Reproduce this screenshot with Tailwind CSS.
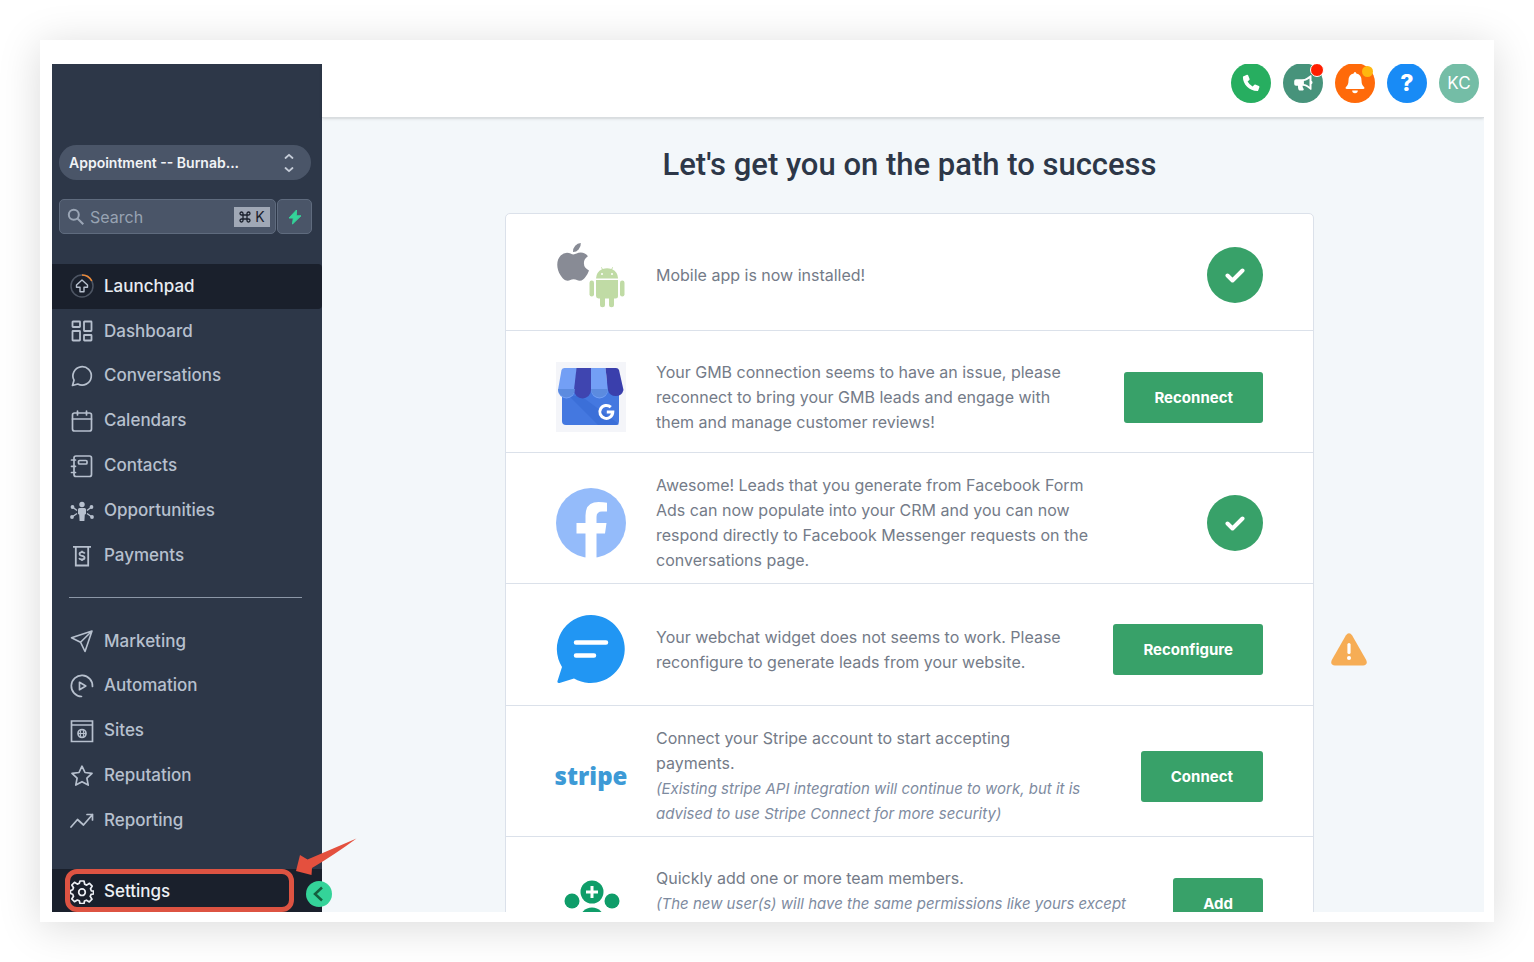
<!DOCTYPE html>
<html lang="en">
<head>
    <meta charset="UTF-8">
    <meta name="viewport" content="width=device-width, initial-scale=1.0">
    <title>Launchpad</title>
    <script src="https://cdn.jsdelivr.net/npm/@tailwindcss/browser@4"></script>
</head>
<body class="h-screen bg-white p-10 font-['Inter',sans-serif]">
    <div class="h-full bg-white pt-6 pr-[10px] pb-[10px] pl-3 shadow-[0_5px_40px_rgba(0,0,0,0.15)]">
        <div class="relative flex h-full overflow-hidden">

            <!-- Sidebar -->
            <aside class="flex w-[270px] shrink-0 flex-col bg-[#2d3748] pt-[81px]">
                <button type="button" class="mr-[11px] ml-[7px] flex h-[35px] shrink-0 items-center justify-between rounded-full bg-[#4a5568] pr-4 pl-[10px] text-sm font-semibold text-[#f1f3f6]">
                    <span>Appointment -- Burnab...</span>
                    <svg class="h-5 w-3" viewBox="0 0 12 20" fill="none" stroke="#c5ccd8" stroke-width="1.800" stroke-linecap="round" stroke-linejoin="round"><path d="M2.500 5 6 1.800l3.500 3.200M2.500 15 6 18.200l3.500-3.200"/></svg>
                </button>

                <div class="mt-[19px] mr-[10px] ml-[7px] flex h-[35px] shrink-0 gap-px">
                    <label class="flex min-w-0 flex-1 items-center rounded-[5px] border border-[#5f6b7e] bg-[#4a5568] pr-[5px] pl-[7px]">
                        <svg class="h-[18px] w-[18px] shrink-0" viewBox="0 0 18 18" fill="none" stroke="#9ba6b6" stroke-width="2"><circle cx="6.800" cy="6.800" r="5"/><path d="m10.500 10.500 5.800 5.800"/></svg>
                        <input type="text" placeholder="Search" aria-label="Search" class="ml-[5px] min-w-0 flex-1 bg-transparent text-base text-white outline-none placeholder:text-[#98a3b3]">
                        <kbd class="flex h-5 w-9 shrink-0 items-center justify-center gap-1 bg-[#a0a8b6] font-['Inter',sans-serif] text-sm text-[#1a202c]">
                            <svg class="h-3 w-3" viewBox="0 0 12 12" fill="none" stroke="currentColor" stroke-width="1.300"><path d="M4 4h4v4H4zM4 4H2.500A1.500 1.500 0 1 1 4 2.500zM8 4V2.500A1.500 1.500 0 1 1 9.500 4zM8 8h1.500A1.500 1.500 0 1 1 8 9.500zM4 8v1.500A1.500 1.500 0 1 1 2.500 8z"/></svg>K
                        </kbd>
                    </label>
                    <button type="button" aria-label="Quick actions" class="flex w-[35px] items-center justify-center rounded-[5px] border border-[#5f6b7e] bg-[#4a5568]">
                        <svg class="h-4 w-4" viewBox="0 0 16 16" fill="#34d399"><path d="M9.500 1 2 9h4.300L5.500 15 14 6.800H9.300z" stroke="#34d399" stroke-linejoin="round"/></svg>
                    </button>
                </div>

                <nav class="mt-[30px] grid h-[314px] shrink-0 auto-rows-fr text-[17px] font-medium text-[#b7c0ce]">
                    <a href="#" class="flex items-center gap-[10px] rounded-r bg-[#1a202c] pl-[18px] text-[#e8ecf2]">
                        <svg class="h-6 w-6" viewBox="0 0 24 24" fill="none" stroke-width="1.500"><circle cx="12" cy="12" r="11" stroke="#4d5563"/><path d="M12 1a11 11 0 0 1 9.800 6" stroke="#ed8936"/><path d="M12 6 6.500 11v2.200H10v4.500h4v-4.500h3.500V11z" stroke="#b7c0ce" stroke-width="1.400" stroke-linejoin="round"/></svg>
                        Launchpad
                    </a>
                    <a href="#" class="flex items-center gap-[10px] pl-[18px]">
                        <svg class="h-6 w-6" viewBox="0 0 24 24" fill="none" stroke="currentColor" stroke-width="1.800"><rect x="2.500" y="2.500" width="7.500" height="5.500" rx=".5"/><rect x="14" y="2.500" width="7.500" height="9.500" rx=".5"/><rect x="2.500" y="12" width="7.500" height="9.500" rx=".5"/><rect x="14" y="16" width="7.500" height="5.500" rx=".5"/></svg>
                        Dashboard
                    </a>
                    <a href="#" class="flex items-center gap-[10px] pl-[18px]">
                        <svg class="h-6 w-6" viewBox="0 0 24 24" fill="none" stroke="currentColor" stroke-width="1.700" stroke-linejoin="round"><path d="M2.500 21.500 4 16.200A9.200 9.200 0 1 1 7.800 20z"/></svg>
                        Conversations
                    </a>
                    <a href="#" class="flex items-center gap-[10px] pl-[18px]">
                        <svg class="h-6 w-6" viewBox="0 0 24 24" fill="none" stroke="currentColor" stroke-width="1.700" stroke-linecap="round"><rect x="2.500" y="4" width="19" height="18" rx="2"/><path d="M2.500 10h19M7.500 2v4M16.500 2v4"/></svg>
                        Calendars
                    </a>
                    <a href="#" class="flex items-center gap-[10px] pl-[18px]">
                        <svg class="h-6 w-6" viewBox="0 0 24 24" fill="none" stroke="currentColor" stroke-width="1.700" stroke-linecap="round"><rect x="4" y="2" width="17.500" height="20.500" rx="2"/><rect x="8.500" y="6.500" width="8.500" height="3.500" rx="1"/><path d="M1.500 6h4M1.500 12.300h4M1.500 18.500h4"/></svg>
                        Contacts
                    </a>
                    <a href="#" class="flex items-center gap-[10px] pl-[18px]">
                        <svg class="h-6 w-6" viewBox="0 0 24 24" fill="currentColor"><circle cx="12" cy="5.500" r="2.700"/><path d="M9.500 9h5q1.500 0 1.500 1.500v4q0 1-1.200 1l-.4 6.500h-4.800l-.4-6.500q-1.200 0-1.200-1v-4Q8 9 9.500 9z"/><circle cx="2.500" cy="8" r="1.900"/><circle cx="2" cy="18" r="1.900"/><circle cx="21.500" cy="8" r="1.900"/><circle cx="22" cy="18" r="1.900"/><path d="M2.500 8 7 11.500M2 18l5-3.500M21.500 8 17 11.500M22 18l-5-3.500" stroke="currentColor" stroke-width="1.400"/></svg>
                        Opportunities
                    </a>
                    <a href="#" class="flex items-center gap-[10px] pl-[18px]">
                        <svg class="h-6 w-6" viewBox="0 0 24 24" fill="none" stroke="currentColor" stroke-width="1.800"><path d="M3 2.800h18M5.800 2.800v18.700h12.400V2.800"/><path d="M14.800 9.500q-.8-1.300-2.800-1.300c-3.200 0-3.400 3.200 0 3.600s3.400 3.700 0 3.700q-2.200 0-2.900-1.400M12 6.800v1.400m0 7.300V17"/></svg>
                        Payments
                    </a>
                </nav>

                <hr class="mt-[19px] mr-5 ml-[17px] border-[#8c97a7]">

                <nav class="mt-[21px] grid h-[224px] shrink-0 auto-rows-fr text-[17px] font-medium text-[#b7c0ce]">
                    <a href="#" class="flex items-center gap-[10px] pl-[18px]">
                        <svg class="h-6 w-6" viewBox="0 0 24 24" fill="none" stroke="currentColor" stroke-width="1.600" stroke-linejoin="round"><path d="M22 2 1.500 8.800l9 4.400L15 22.500zM22 2 10.500 13.200"/></svg>
                        Marketing
                    </a>
                    <a href="#" class="flex items-center gap-[10px] pl-[18px]">
                        <svg class="h-6 w-6" viewBox="0 0 24 24" fill="none" stroke="currentColor" stroke-width="1.700" stroke-linecap="round" stroke-linejoin="round"><path d="M11.500 22.500A10.600 10.600 0 1 1 22.500 12.500M9.500 8.300v7.400l6.300-3.700z"/></svg>
                        Automation
                    </a>
                    <a href="#" class="flex items-center gap-[10px] pl-[18px]">
                        <svg class="h-6 w-6" viewBox="0 0 24 24" fill="none" stroke="currentColor" stroke-width="1.700"><path d="M1.500 2h21v20.500h-21zM1.500 6h21"/><circle cx="12" cy="14.500" r="4"/><ellipse cx="12" cy="14.500" rx="1.700" ry="4" stroke-width="1.100"/><path d="M8 14.500h8" stroke-width="1.200"/></svg>
                        Sites
                    </a>
                    <a href="#" class="flex items-center gap-[10px] pl-[18px]">
                        <svg class="h-6 w-6" viewBox="0 0 24 24" fill="none" stroke="currentColor" stroke-width="1.700" stroke-linejoin="round"><path d="m12 2.200 3 6.300 7 .9-5.100 4.800 1.300 6.900L12 17.700l-6.200 3.400 1.300-6.900L2 9.400l7-.9z"/></svg>
                        Reputation
                    </a>
                    <a href="#" class="flex items-center gap-[10px] pl-[18px]">
                        <svg class="h-6 w-6" viewBox="0 0 24 24" fill="none" stroke="currentColor" stroke-width="1.700" stroke-linecap="round" stroke-linejoin="round"><path d="m1 18 6.500-7.500 6 5.500 9-10.500M17 5.500h5.500V11"/></svg>
                        Reporting
                    </a>
                </nav>

                <a href="#" class="mt-[26px] flex flex-1 items-center gap-[10px] bg-[#1a202c] pt-[3px] pl-[18px] text-[17px] font-medium text-[#edf0f5]">
                    <svg class="h-6 w-6" viewBox="0 0 24 24" fill="none" stroke="currentColor" stroke-width="1.700" stroke-linejoin="round"><path d="M10 1h4l.7 3.200 2 .9 2.800-1.800 2.700 2.800-1.700 2.700.8 2L23.500 11v3l-2.400.4-.9 2 1.800 2.800-2.700 2.700-2.800-1.700-2 .8L14 23.500h-4l-.7-2.700-2-.8-2.800 1.700L1.800 19l1.700-2.800-.8-2L.5 13.500v-3l2.200-.7.8-2L1.800 5l2.700-2.700 2.800 1.800 2-.9z"/><circle cx="12" cy="12.200" r="3.300"/></svg>
                    Settings
                </a>
            </aside>

            <!-- Main -->
            <div class="flex min-w-0 flex-1 flex-col bg-[#f3f7fa]">
                <header class="z-10 h-[54px] shrink-0 border-b border-[#d9dde0] bg-white pr-[5px] shadow-sm">
                    <div class="-mt-px flex justify-end gap-3">
                        <button type="button" aria-label="Call" class="flex h-10 w-10 items-center justify-center rounded-full bg-[#27ae60]">
                            <svg class="h-5 w-5" viewBox="0 0 20 20" fill="white"><path d="M2.600 3.200 6 1.800q.8-.2 1.100.5L8.600 6q.2.700-.3 1.100L6.600 8.600a12 12 0 0 0 5 5l1.500-1.700q.5-.5 1.100-.3l3.700 1.500q.7.400.5 1.100l-1.200 3.200q-.2.700-.9.700C8.400 18.100 1.900 11.600 1.900 4.100q0-.7.700-.9z"/></svg>
                        </button>
                        <button type="button" aria-label="Announcements" class="relative flex h-10 w-10 items-center justify-center rounded-full bg-[#47937b]">
                            <svg class="h-5 w-5" viewBox="0 0 20 20" fill="white"><path fill-rule="evenodd" d="M17.500 2.200q1-.4 1 .8v4.800a2 2 0 0 1 0 3.500v4.800q0 1.200-1 .6l-3.600-2.600q-2-1.300-4.400-1.300.1 2 1.200 3.300.4 1.300-.9 1.500H6.600q-.8 0-1-.8-.8-2-.6-4H3q-1.800 0-1.800-1.800V8.200Q1.200 6.300 3 6.300h6q2.700 0 4.900-1.500zm-1 3.300-1.600 1.100q-1.800 1.200-4 1.500v3q2.200.3 4 1.500l1.600 1.100z"/></svg>
                            <span class="absolute top-0 -right-px h-[14px] w-[14px] rounded-full border border-white bg-[#ff1e00]"></span>
                        </button>
                        <button type="button" aria-label="Notifications" class="relative flex h-10 w-10 items-center justify-center rounded-full bg-[#ff6a0a]">
                            <svg class="h-[22px] w-[22px]" viewBox="0 0 22 22" fill="white"><path d="M11 0q1.300 0 1.300 1.500 5.200 1 5.200 7 0 4.500 2.800 6.700.7 1.800-1 1.800H2.700q-1.700 0-1-1.800 2.800-2.200 2.800-6.700 0-6 5.200-7Q9.700 0 11 0zM8.200 18.500h5.600a2.800 2.800 0 0 1-5.600 0z"/></svg>
                            <span class="absolute top-[3px] right-[2px] h-[11px] w-[11px] rounded-full bg-[#ffb70f]"></span>
                        </button>
                        <button type="button" aria-label="Help" class="flex h-10 w-10 items-center justify-center rounded-full bg-[#188bf6] pt-px text-[23px] font-extrabold text-white">?</button>
                        <button type="button" aria-label="Account" class="flex h-10 w-10 items-center justify-center rounded-full bg-[#74bda6] pt-[2px] text-[17px] text-white">KC</button>
                    </div>
                </header>

                <main class="pl-[13px]">
                    <h1 class="mt-[25px] text-center font-['Roboto',sans-serif] text-[31px] leading-[44px] font-medium text-[#2d3748]">Let's get you on the path to success</h1>

                    <ul class="mx-auto mt-[26px] w-full max-w-[809px] divide-y divide-[#dbe1ea] rounded-[5px] border border-[#dbe1ea] bg-white text-base leading-[25px] text-[#747b88]">
                        <li class="flex min-h-[117px] items-center gap-[30px] px-[50px] pt-[6px]">
                            <svg class="h-[70px] w-[70px] shrink-0" viewBox="0 0 70 70"><g fill="#888b95"><path d="M24.800 3q.4 3.700-2.200 6.400Q20.300 12 17 11.900q-.2-3.500 2.200-6.200Q21.500 3.300 24.800 3z"/><path d="M17.500 14.400c2 0 4-1.900 7.200-1.900q4.700.1 7.200 3.700-4.200 2.700-4 7.100.1 4.900 5.100 7.100-1 3-3.200 6c-1.800 2.500-3.400 4.300-6 4.300-2.400 0-3.300-1.500-6.200-1.500s-3.800 1.500-6 1.500C8.500 40.700 6.300 38 4.500 35.300 0 28.500.3 20 4.700 15.600Q7.500 12.700 11 12.700c2.800 0 4.500 1.700 6.500 1.700z"/></g><g fill="#c0dba5"><path d="M40 38.500q.3-6.500 6-9.200l-1-1.800.5-.4 1.300 1.800a13 13 0 0 1 8.500 0l1.300-1.800.5.400-1 1.800q5.700 2.700 6 9.200zM40 40h22v16q0 2.500-2.500 2.500H58v6.200a2.500 2.500 0 0 1-5 0v-6.200h-4v6.200a2.500 2.500 0 0 1-5 0v-6.200h-1.500Q40 58.500 40 56z"/><rect x="33.500" y="40.500" width="4.500" height="16" rx="2.200"/><rect x="64" y="40.500" width="4.500" height="16" rx="2.200"/></g><circle cx="46" cy="34" r="1" fill="white"/><circle cx="56" cy="34" r="1" fill="white"/></svg>
                            <p class="flex-1">Mobile app is now installed!</p>
                            <span class="flex h-14 w-14 items-center justify-center rounded-full bg-[#38a169]"><svg class="h-5 w-5" viewBox="0 0 20 20" fill="none" stroke="white" stroke-width="4" stroke-linecap="round" stroke-linejoin="round"><path d="m2.500 10.500 5 5 10-10"/></svg></span>
                        </li>
                        <li class="flex min-h-[122px] items-center gap-[30px] px-[50px] pt-[11px]">
                            <svg class="h-[70px] w-[70px] shrink-0" viewBox="0 0 70 70"><path fill="#f4f5f9" d="M0 0h70v70H0z"/><rect x="6" y="20" width="57" height="43" rx="4" fill="#4478e0"/><path d="M13 34 25 34 63 62q-1 1-4 1H42z" fill="#3b6fd8"/><path d="M5.500 8q.8-2 3-2H21l-2 22a8.500 8.500 0 0 1-17 0z" fill="#739ff5"/><path d="M20.500 6H35v22a8.200 8.200 0 0 1-17 0z" fill="#3f45b0"/><path d="M35 6h14.500L52 28a8.500 8.500 0 0 1-17 0z" fill="#739ff5"/><path d="M49.500 6H60q2.200 0 3 2l4.500 20a8 8 0 0 1-15.500 0z" fill="#3a3fac"/><path d="M2 27h17a8.500 8.500 0 0 1-17 0zm33 0h17a8.500 8.500 0 0 1-17 0z" fill="#5c8bdf"/><path d="M54.800 45.200a6.500 6.500 0 1 0 2 4.800h-6" fill="none" stroke="white" stroke-width="3"/></svg>
                            <p class="flex-1">Your GMB connection seems to have an issue, please<br>reconnect to bring your GMB leads and engage with<br>them and manage customer reviews!</p>
                            <button type="button" class="h-[51px] rounded-[3px] bg-[#38a169] px-[30px] text-[15px] font-bold text-white">Reconnect</button>
                        </li>
                        <li class="flex min-h-[131px] items-center gap-[30px] px-[50px] pt-[10px]">
                            <svg class="h-[70px] w-[70px] shrink-0" viewBox="0 0 70 70"><circle cx="35" cy="35" r="35" fill="#94bbfa"/><path d="M29.500 70V45.500H20.500V35h9v-7.500Q29.500 14 42.500 14q5 0 8.500.7v8.800h-5Q40.500 23.500 40.500 29v6h10L49 45.500h-8.500V70z" fill="white"/></svg>
                            <p class="flex-1">Awesome! Leads that you generate from Facebook Form<br>Ads can now populate into your CRM and you can now<br>respond directly to Facebook Messenger requests on the<br>conversations page.</p>
                            <span class="flex h-14 w-14 items-center justify-center rounded-full bg-[#38a169]"><svg class="h-5 w-5" viewBox="0 0 20 20" fill="none" stroke="white" stroke-width="4" stroke-linecap="round" stroke-linejoin="round"><path d="m2.500 10.500 5 5 10-10"/></svg></span>
                        </li>
                        <li class="relative flex min-h-[122px] items-center gap-[30px] px-[50px] pt-[10px]">
                            <svg class="h-[70px] w-[70px] shrink-0" viewBox="0 0 70 70"><path d="M35 0a34 34 0 1 1-17 63.600L3.500 68q-2.500.3-2-2L6 52A34 34 0 0 1 35 0z" fill="#2196f3"/><path d="M20 27.500h30M20 40.500h18" stroke="white" stroke-width="4.500" stroke-linecap="round"/></svg>
                            <p class="flex-1">Your webchat widget does not seems to work. Please<br>reconfigure to generate leads from your website.</p>
                            <button type="button" class="h-[51px] rounded-[3px] bg-[#38a169] px-[30px] text-[15px] font-bold text-white">Reconfigure</button>
                            <svg class="absolute -right-[54px] bottom-[38px] h-9 w-9" viewBox="0 0 36 36"><path d="M14.800 4.500q3.200-4.500 6.400 0l14 24.500q2 5-3.200 5.500H4Q-1.200 34 .8 29z" fill="#f6ad55"/><path d="M18 13.500v8" stroke="white" stroke-width="3.200" stroke-linecap="round"/><circle cx="18" cy="27" r="2" fill="white"/></svg>
                        </li>
                        <li class="flex min-h-[131px] items-center gap-[30px] px-[50px] pt-[10px]">
                            <span class="flex w-[70px] shrink-0 justify-center font-['Open_Sans',sans-serif] text-2xl font-extrabold text-[#3d9ad6]">stripe</span>
                            <p class="flex-1">Connect your Stripe account to start accepting<br>payments.<br><em class="text-[15px] text-[#7e8b9f]">(Existing stripe API integration will continue to work, but it is<br>advised to use Stripe Connect for more security)</em></p>
                            <button type="button" class="h-[51px] rounded-[3px] bg-[#38a169] px-[30px] text-[15px] font-bold text-white">Connect</button>
                        </li>
                        <li class="flex min-h-[132px] items-center gap-[30px] px-[50px]">
                            <svg class="h-[70px] w-[70px] shrink-0" viewBox="0 0 70 70" fill="#0f9d69"><circle cx="36" cy="24" r="11.500"/><circle cx="16" cy="33" r="7.500"/><circle cx="56" cy="33" r="7.500"/><circle cx="36" cy="52" r="12.500"/><path d="M3 58v-6q0-6 7-6h8v12zm51 0V46h8q7 0 7 6v6z"/><path d="M36 18v12M30 24h12" stroke="white" stroke-width="3"/></svg>
                            <p class="flex-1 pb-[25px]">Quickly add one or more team members.<br><em class="text-[15px] text-[#7e8b9f]">(The new user(s) will have the same permissions like yours except</em></p>
                            <button type="button" class="h-[51px] rounded-[3px] bg-[#38a169] px-[30px] text-[15px] font-bold text-white">Add</button>
                        </li>
                    </ul>
                </main>
            </div>

            <!-- Collapse button, highlight box and arrow over the Settings item -->
            <button type="button" aria-label="Collapse sidebar" class="absolute bottom-[5px] left-[254px] z-20 flex h-[26px] w-[26px] items-center justify-center rounded-full bg-[#34d399]">
                <svg class="h-4 w-4" viewBox="0 0 16 16" fill="none" stroke="#14603f" stroke-width="2.500"><path d="m11 1.500-7 6.500 7 6.500"/></svg>
            </button>
            <div class="absolute bottom-0 left-[13px] z-20 h-[43px] w-[229px] rounded-[12px] border-[5px] border-[#dd5342]"></div>
            <svg class="absolute bottom-[35px] left-[242px] z-20 h-10 w-16" viewBox="0 0 64 40" fill="#e4503e"><path d="M62.500 1.500Q40 18 18 31l-.5 7L2 34 6 18l7.500 4.500Z"/></svg>
        </div>
    </div>
</body>
</html>
